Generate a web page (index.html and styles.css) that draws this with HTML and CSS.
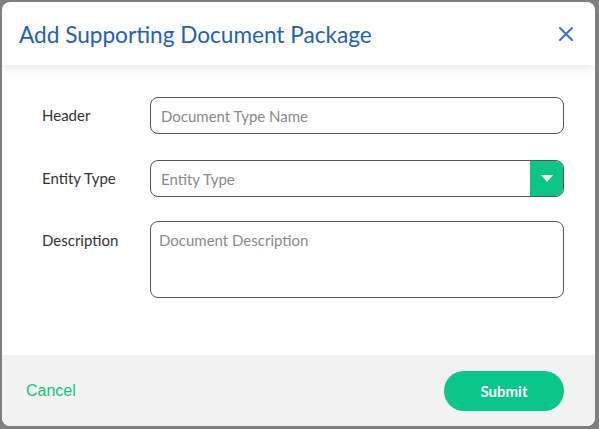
FILE: index.html
```html
<!DOCTYPE html>
<html>
<head>
<meta charset="utf-8">
<link rel="stylesheet" href="styles.css">
</head>
<body>
<div class="modal">
  <div class="modal-header">
    <h1 class="title">Add Supporting Document Package</h1>
    <button class="close" aria-label="Close">
      <svg width="14" height="14" viewBox="0 0 14 14"><path d="M1 1L13 13M13 1L1 13" stroke="#3a72c4" stroke-width="2" stroke-linecap="round"/></svg>
    </button>
  </div>
  <div class="modal-body">
    <div class="row row-header">
      <label class="label">Header</label>
      <div class="field"><span class="placeholder">Document Type Name</span></div>
    </div>
    <div class="row row-entity">
      <label class="label">Entity Type</label>
      <div class="field select">
        <span class="placeholder">Entity Type</span>
        <span class="caret"><svg width="12" height="7" viewBox="0 0 12 7"><path d="M0 0H12L6 7Z" fill="#fff"/></svg></span>
      </div>
    </div>
    <div class="row row-desc">
      <label class="label">Description</label>
      <div class="field textarea"><span class="placeholder">Document Description</span></div>
    </div>
  </div>
  <div class="modal-footer">
    <a class="cancel">Cancel</a>
    <button class="submit">Submit</button>
  </div>
</div>
</body>
</html>
```
FILE: styles.css
```css
* { box-sizing: border-box; }
html, body { margin: 0; padding: 0; }
body {
  background: #7f7f7f;
  width: 599px;
  height: 429px;
  overflow: hidden;
  font-family: "Lato", "Open Sans", sans-serif;
}
.modal {
  margin: 2px 0 0 2px;
  width: 593px;
  height: 424px;
  background: #fff;
  border-radius: 8px;
  overflow: hidden;
  display: flex;
  flex-direction: column;
}
.modal-header {
  height: 63px;
  flex: none;
  display: flex;
  align-items: center;
  justify-content: space-between;
  padding: 2px 22px 0 17px;
  box-shadow: 0 3px 8px rgba(0,0,0,0.09);
  position: relative;
  z-index: 1;
}
.title {
  margin: 0;
  font-size: 22.6px;
  font-weight: 400;
  color: #2360b8;
}
.close {
  border: 0;
  background: none;
  padding: 0;
  width: 14px;
  height: 14px;
  display: flex;
  margin-top: -2px;
}
.modal-body {
  flex: 1;
  padding: 32px 31px 0 40px;
  display: flex;
  flex-direction: column;
}
.row {
  display: flex;
  align-items: center;
}
.row-entity { margin-top: 26px; }
.row-desc { margin-top: 24px; align-items: flex-start; }
.label {
  width: 108px;
  flex: none;
  font-size: 15px;
  color: #333;
  margin-top: -2px;
}
.row-desc .label { padding-top: 10px; margin-top: 0; }
.field {
  flex: 1;
  height: 37px;
  border: 1px solid #555;
  border-radius: 8px;
  display: flex;
  align-items: center;
  padding: 0 10px;
  overflow: hidden;
}
.placeholder {
  font-size: 15px;
  color: #8a8a8a;
}
.select { padding-right: 0; justify-content: space-between; }
.caret {
  width: 33px;
  height: 100%;
  background: #0cc688;
  display: flex;
  align-items: center;
  justify-content: center;
}
.textarea {
  height: 77px;
  align-items: flex-start;
  padding-top: 9px;
  padding-left: 8px;
}
.modal-footer {
  height: 71px;
  flex: none;
  background: #f2f2f2;
  display: flex;
  align-items: center;
  justify-content: space-between;
  padding: 0 31px 0 24px;
}
.cancel {
  font-family: "Liberation Sans", Arial, sans-serif;
  font-size: 16px;
  color: #10c58a;
}
.submit {
  width: 120px;
  height: 40px;
  border: 0;
  border-radius: 20px;
  background: #09c68a;
  color: #fff;
  font-family: "Lato", sans-serif;
  font-size: 15px;
  font-weight: 700;
}
```
